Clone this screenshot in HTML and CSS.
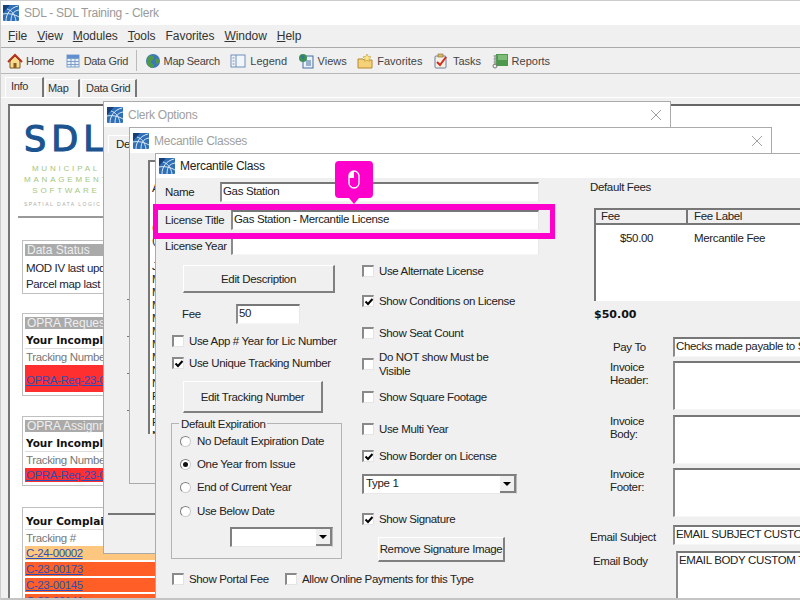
FILE: index.html
```html
<!DOCTYPE html>
<html lang="en">
<head>
  <meta charset="UTF-8">
  <title>SDL - SDL Training - Clerk</title>
  <link rel="stylesheet" href="styles.css">
</head>
<body>
  <svg class="defs" width="0" height="0">
    <symbol id="globe" viewBox="0 0 16 16">
      <rect width="16" height="16" rx="1" fill="#2f6fb5"/>
      <path d="M0 0h7L0 8z" fill="#173f78"/>
      <path d="M3 16C3 9 7 3 15 1M8 16C8 10 10 6 16 5M0 9c5-1 11 0 16 3M4 4c4 1 8 5 9 12" fill="none" stroke="#d8e8f6" stroke-width="1"/>
    </symbol>
    <symbol id="close" viewBox="0 0 12 12">
      <path d="M1 1l10 10M11 1L1 11" stroke="#a0a0a0" stroke-width="1" fill="none"/>
    </symbol>
    <symbol id="tick" viewBox="0 0 12 12">
      <path d="M2.5 5.5l2.5 2.5 4.5-5" stroke="#000" stroke-width="2" fill="none"/>
    </symbol>
  </svg>

  <div class="app">
    <div class="app-title">
      <svg class="icon16"><use href="#globe"/></svg>
      <span>SDL - SDL Training - Clerk</span>
    </div>

    <div class="menubar">
      <span><u>F</u>ile</span>
      <span><u>V</u>iew</span>
      <span><u>M</u>odules</span>
      <span><u>T</u>ools</span>
      <span>Favorites</span>
      <span><u>W</u>indow</span>
      <span><u>H</u>elp</span>
    </div>

    <div class="toolbar">
      <div class="tool">
        <svg class="tool-icon" viewBox="0 0 16 16"><path d="M3 8v7h10V8L8 3z" fill="#f6dc8c" stroke="#7a5a20"/><path d="M1 9l7-7 7 7" fill="none" stroke="#b5301c" stroke-width="2"/><rect x="6.500" y="10" width="3" height="5" fill="#8a5a20"/></svg>
        <span>Home</span>
      </div>
      <div class="tool">
        <svg class="tool-icon" viewBox="0 0 16 16"><rect x="2" y="2" width="12" height="12" fill="#e8f0fa" stroke="#7f9fc8"/><path d="M2 5.500h12M2 8.500h12M2 11.500h12M6 2v12M10 2v12" stroke="#7f9fc8"/><rect x="2" y="2" width="12" height="3" fill="#5f8fd0"/></svg>
        <span>Data Grid</span>
      </div>
      <div class="tool-sep"></div>
      <div class="tool">
        <svg class="tool-icon" viewBox="0 0 16 16"><circle cx="8" cy="8" r="7" fill="#3f78b8"/><path d="M4 3c3-1 5 0 5 2S6 7 6 9s3 2 3 4l-2 2C3 14 1 10 2 7z" fill="#4f9a48"/><path d="M11 6c2-1 3 0 3 2s-1 3-2 3-2-4-1-5z" fill="#4f9a48"/></svg>
        <span>Map Search</span>
      </div>
      <div class="tool tool-wide">
        <svg class="tool-icon" viewBox="0 0 16 16"><rect x="1" y="2" width="14" height="12" fill="#f2f6fb" stroke="#6f8fbc"/><path d="M6 2v12" stroke="#6f8fbc"/><path d="M2.500 5h2M2.500 8h2M2.500 11h2" stroke="#6f8fbc"/></svg>
        <span>Legend</span>
      </div>
      <div class="tool tool-wide">
        <svg class="tool-icon" viewBox="0 0 16 16"><rect x="5" y="3" width="10" height="12" fill="#e9f1fa" stroke="#466f9f"/><path d="M8 8h5M8 10h5M8 12h5" stroke="#466f9f"/><circle cx="5" cy="5" r="4" fill="#3f8f58"/><path d="M3 3c2 0 3 1 2 3" stroke="#2f6fb5" fill="none" stroke-width="1.500"/></svg>
        <span>Views</span>
      </div>
      <div class="tool tool-wide">
        <svg class="tool-icon" viewBox="0 0 16 16"><path d="M1 6h5l1 1h8v8H1z" fill="#f5d27a" stroke="#b58a30"/><path d="M10 1l1.200 2.500 2.800.3-2 2 .5 2.700-2.500-1.300-2.500 1.300.5-2.700-2-2 2.800-.3z" fill="#fbe68a" stroke="#c09a30" stroke-width=".6"/></svg>
        <span>Favorites</span>
      </div>
      <div class="tool tool-wide">
        <svg class="tool-icon" viewBox="0 0 16 16"><rect x="2" y="3" width="11" height="12" rx="1" fill="#f4f0e4" stroke="#6f7f9f"/><rect x="5" y="1" width="5" height="3" fill="#d8b86a" stroke="#8a7030" stroke-width=".6"/><path d="M4 9l3 3 6-8" stroke="#d02a20" stroke-width="2" fill="none"/></svg>
        <span>Tasks</span>
      </div>
      <div class="tool tool-wide">
        <svg class="tool-icon" viewBox="0 0 16 16"><rect x="4" y="1" width="12" height="12" fill="#4d9a4f"/><rect x="6" y="2" width="9" height="5" fill="#7dbb78"/><path d="M3 2v10" stroke="#777"/><path d="M1.500 3h3M1.500 6h3M1.500 9h3" stroke="#999"/><circle cx="3" cy="13" r="2" fill="none" stroke="#777"/></svg>
        <span>Reports</span>
      </div>
    </div>

    <div class="tabs">
      <div class="tab tab-active">Info</div>
      <div class="tab tab-map">Map</div>
      <div class="tab tab-grid">Data Grid</div>
    </div>

    <div class="pane">
      <div class="panel">
        <div class="logo">
          <div class="logo-sdl">SDL</div>
          <div class="logo-sub">MUNICIPAL<br>MANAGEMENT<br>SOFTWARE</div>
          <div class="logo-small">SPATIAL DATA LOGIC</div>
        </div>
        <div class="logo-rule"></div>

        <div class="card card-status">
          <div class="card-head">Data Status</div>
          <div class="card-row">MOD IV last updated</div>
          <div class="card-row">Parcel map last updated</div>
        </div>

        <div class="card card-opra">
          <div class="card-head">OPRA Requests</div>
          <div class="card-bold">Your Incomplete</div>
          <div class="card-row muted">Tracking Number</div>
          <div class="card-link red tall"><a>OPRA-Req-23-00012</a></div>
        </div>

        <div class="card card-assign">
          <div class="card-head">OPRA Assignments</div>
          <div class="card-bold">Your Incomplete</div>
          <div class="card-row muted">Tracking Number</div>
          <div class="card-link red"><a>OPRA-Req-23-00012</a></div>
        </div>

        <div class="card card-complaints">
          <div class="card-bold">Your Complaints</div>
          <div class="card-row muted">Tracking #</div>
          <div class="card-link peach"><a>C-24-00002</a></div>
          <div class="card-link orange"><a>C-23-00173</a></div>
          <div class="card-link orange"><a>C-23-00145</a></div>
          <div class="card-link orange"><a>C-23-00141</a></div>
        </div>
      </div>
    </div>

    <!-- stacked child windows -->
    <div class="window win-options">
      <div class="win-title">
        <svg class="icon16"><use href="#globe"/></svg>
        <span>Clerk Options</span>
        <svg class="win-close"><use href="#close"/></svg>
      </div>
      <div class="win-body">
        <div class="sub-tab">Details</div>
        <div class="sub-panel">
          <i></i><i></i><i></i><i></i>
        </div>
      </div>
    </div>

    <div class="window win-classes">
      <div class="win-title">
        <svg class="icon16"><use href="#globe"/></svg>
        <span>Mecantile Classes</span>
        <svg class="win-close"><use href="#close"/></svg>
      </div>
      <div class="win-body">
        <div class="class-list">
          <div>Auto</div><div>&nbsp;</div><div>&nbsp;</div><div>(Class</div><div>(Other</div><div>&nbsp;</div><div>John</div>
          <div>Market</div><div>Mobile</div><div>Motor</div><div>Movie</div><div>Music</div><div>Meat</div><div>Milk</div>
          <div>Nail</div><div>News</div><div>Peddler</div><div>Pet</div><div>Pool</div><div>Nursery</div>
        </div>
      </div>
    </div>

    <div class="window win-class">
      <div class="win-title win-title-on">
        <svg class="icon16"><use href="#globe"/></svg>
        <span>Mercantile Class</span>
      </div>
      <div class="class-form">
        <div class="form-main">
          <div class="field name-row">
            <label class="label-name">Name</label>
            <div class="input">Gas Station</div>
          </div>
          <div class="field title-row">
            <label class="label-title">License Title</label>
            <div class="input">Gas Station - Mercantile License</div>
          </div>
          <div class="field year-row">
            <label class="label-title">License Year</label>
            <div class="input"></div>
          </div>

          <div class="form-cols">
            <div class="col-left">
              <button class="btn btn-desc">Edit Description</button>
              <div class="fee-row">
                <label>Fee</label>
                <div class="input fee-input">50</div>
              </div>
              <div class="check-row app-year"><span class="check"></span>Use App # Year for Lic Number</div>
              <div class="check-row unique"><span class="check"><svg><use href="#tick"/></svg></span>Use Unique Tracking Number</div>
              <button class="btn btn-track">Edit Tracking Number</button>
              <div class="group">
                <span class="group-legend">Default Expiration</span>
                <div class="radio-row"><span class="radio"></span>No Default Expiration Date</div>
                <div class="radio-row"><span class="radio radio-on"></span>One Year from Issue</div>
                <div class="radio-row"><span class="radio"></span>End of Current Year</div>
                <div class="radio-row"><span class="radio"></span>Use Below Date</div>
                <div class="combo date-combo"><span class="combo-text"></span><span class="combo-arrow"></span></div>
              </div>
            </div>

            <div class="col-mid">
              <div class="check-row m-alt"><span class="check"></span>Use Alternate License</div>
              <div class="check-row m-cond"><span class="check"><svg><use href="#tick"/></svg></span>Show Conditions on License</div>
              <div class="check-row m-seat"><span class="check"></span>Show Seat Count</div>
              <div class="check-row check-wrap m-must"><span class="check"></span><span>Do NOT show Must be<br>Visible</span></div>
              <div class="check-row m-square"><span class="check"></span>Show Square Footage</div>
              <div class="check-row m-multi"><span class="check"></span>Use Multi Year</div>
              <div class="check-row m-border"><span class="check"><svg><use href="#tick"/></svg></span>Show Border on License</div>
              <div class="combo type-combo"><span class="combo-text">Type 1</span><span class="combo-arrow"></span></div>
              <div class="check-row m-sign"><span class="check"><svg><use href="#tick"/></svg></span>Show Signature</div>
              <button class="btn btn-sign">Remove Signature Image</button>
            </div>
          </div>

          <div class="form-bottom">
            <div class="check-row portal"><span class="check"></span>Show Portal Fee</div>
            <div class="check-row"><span class="check"></span>Allow Online Payments for this Type</div>
          </div>
        </div>

        <div class="form-side">
          <div class="side-caption">Default Fees</div>
          <div class="listview">
            <div class="lv-head">
              <div class="lv-col1">Fee</div>
              <div class="lv-col2">Fee Label</div>
            </div>
            <div class="lv-row">
              <div class="lv-col1 lv-amount">$50.00</div>
              <div class="lv-col2">Mercantile Fee</div>
            </div>
          </div>
          <div class="total">$50.00</div>
          <div class="side-row pay-row">
            <label class="side-label">Pay To</label>
            <div class="input side-input">Checks made payable to SDL Training</div>
          </div>
          <div class="side-row tight-row">
            <label class="side-label">Invoice<br>Header:</label>
            <div class="input side-area"></div>
          </div>
          <div class="side-row">
            <label class="side-label">Invoice<br>Body:</label>
            <div class="input side-area"></div>
          </div>
          <div class="side-row tight-row">
            <label class="side-label">Invoice<br>Footer:</label>
            <div class="input side-area"></div>
          </div>
          <div class="side-row subject-row">
            <label class="side-label label-email">Email Subject</label>
            <div class="input side-input">EMAIL SUBJECT CUSTOM TEXT</div>
          </div>
          <div class="side-row body-row">
            <label class="side-label label-body">Email Body</label>
            <div class="input side-body">EMAIL BODY CUSTOM TEXT</div>
          </div>
        </div>
      </div>
    </div>

    <!-- tutorial highlight and click marker -->
    <div class="highlight"></div>
    <div class="callout">
      <svg class="mouse" viewBox="0 0 12 19">
        <rect x="1" y="1" width="10" height="17" rx="5" fill="none" stroke="#fff" stroke-width="1.400"/>
        <path d="M6 1a5 5 0 0 0-5 5v2h5z" fill="#fff"/>
      </svg>
    </div>
  </div>
</body>
</html>
```

FILE: styles.css
```css
* {
  box-sizing: border-box;
}

body {
  margin: 0;
  background: #fff;
  font-family: "Liberation Sans", Arial, sans-serif;
  font-size: 11.5px;
  letter-spacing: -0.35px;
  color: #222;
}

label {
  white-space: nowrap;
}

.defs {
  position: absolute;
}

.app {
  position: relative;
  width: 800px;
  height: 600px;
  overflow: hidden;
  background: #f0f0f0;
  border-top: 1px solid #ccc;
  border-left: 1px solid #ccc;
}

.app::after {
  content: "";
  position: absolute;
  left: 0;
  right: 0;
  bottom: 0;
  height: 2px;
  background: #c4c4c4;
}

.icon16 {
  width: 16px;
  height: 16px;
  flex: none;
}

/* title, menu, toolbar */
.app-title {
  display: flex;
  align-items: center;
  gap: 5px;
  height: 24px;
  padding-left: 2px;
  background: #fff;
  font-size: 12px;
  letter-spacing: -0.25px;
  color: #9a9a9a;
}

.menubar {
  display: flex;
  align-items: center;
  gap: 10px;
  height: 23px;
  padding-left: 7px;
  border-bottom: 1px solid #aaa;
  font-size: 12px;
  letter-spacing: -0.05px;
  color: #333;
}

.toolbar {
  display: flex;
  align-items: center;
  height: 26px;
  padding-left: 6px;
  border-bottom: 1px solid #b8b8b8;
  font-size: 11px;
  letter-spacing: -0.3px;
  color: #444;
}

.tool {
  display: flex;
  align-items: center;
  gap: 3px;
  margin-right: 10.5px;
}

.tool-wide {
  gap: 4px;
  letter-spacing: 0;
}

.tool-icon {
  width: 16px;
  height: 16px;
  flex: none;
}

.tool-sep {
  width: 1px;
  height: 21px;
  margin: 0 8px 0 -3px;
  background: #bbb;
}

/* main tabs */
.tabs {
  display: flex;
  align-items: flex-end;
  height: 24px;
  padding-left: 4px;
  border-bottom: 1px solid #fff;
  font-size: 11px;
  letter-spacing: -0.3px;
}

.tab {
  height: 18px;
  padding: 2px 0 0 2px;
  margin-right: 1px;
  border-top: 1px solid #fff;
  border-left: 1px solid #fff;
  border-right: 2px solid #777;
  color: #333;
}

.tab-active {
  height: 20px;
  width: 39px;
  padding-left: 5px;
  padding-top: 2px;
}

.tab-map {
  width: 35px;
}

.tab-grid {
  width: 56px;
  padding-left: 4px;
}

.pane {
  padding: 6px 0 0 7px;
}

.panel {
  height: 495px;
  padding-left: 11px;
  background: #fff;
  border-top: 2px solid #666;
  border-left: 2px solid #777;
}

/* logo */
.logo {
  width: 200px;
  height: 110px;
  padding: 15px 0 0 3px;
}

.logo-sdl {
  font-family: "DejaVu Sans", sans-serif;
  font-size: 35px;
  line-height: 36px;
  letter-spacing: 5px;
  -webkit-text-stroke: 1.2px #1c5490;
  color: #1c5490;
}

.logo-sub {
  width: 84px;
  margin-top: 6px;
  font-size: 8px;
  line-height: 11px;
  letter-spacing: 2.8px;
  text-align: center;
  white-space: nowrap;
  color: #a6c67c;
}

.logo-small {
  margin-top: 5px;
  font-size: 5px;
  letter-spacing: 1.500px;
  color: #aaa;
  white-space: nowrap;
}

.logo-rule {
  width: 150px;
  height: 2px;
  margin-left: -3px;
  background: #999;
}

/* info cards */
.card {
  width: 290px;
  margin-left: 1px;
  padding: 3px 2px;
  border: 1px solid #c0c0c0;
  color: #223;
}

.card-status {
  height: 54px;
  margin-top: 22px;
}

.card-opra {
  height: 83px;
  margin-top: 19px;
}

.card-assign {
  height: 70px;
  margin-top: 20px;
}

.card-complaints {
  height: 110px;
  margin-top: 21px;
}

.card-head {
  height: 12px;
  padding-left: 2px;
  background: #aaa;
  font-size: 12px;
  line-height: 12px;
  letter-spacing: 0;
  color: #eee;
}

.card-row {
  height: 16px;
  padding-left: 1px;
  line-height: 16px;
  white-space: nowrap;
}

.card-status .card-head {
  margin-bottom: 4px;
}

.muted {
  color: #777;
}

.card-bold {
  height: 20px;
  padding: 4px 0 0 1px;
  border-bottom: 1px solid #ddd;
  font-family: "DejaVu Sans", sans-serif;
  font-size: 10.5px;
  font-weight: bold;
  line-height: 14px;
  letter-spacing: 0;
  color: #111;
  white-space: nowrap;
}

.card-complaints .card-bold {
  height: 19px;
  padding-top: 3px;
}

.card-link {
  display: flex;
  align-items: center;
  height: 14px;
  margin-bottom: 2px;
  padding-left: 1px;
}

.card-link a {
  color: #2b4fb8;
  text-decoration: underline;
  letter-spacing: -0.4px;
}

.tall {
  height: 27px;
  padding-top: 3px;
}

.red {
  background: #ff2f2f;
}

.peach {
  background: #fdc77f;
}

.orange {
  background: #ff5f26;
}

/* windows */
.window {
  position: absolute;
  background: #f0f0f0;
  border: 1px solid #aaa;
}

.win-options {
  left: 102px;
  top: 100px;
  width: 568px;
  height: 453px;
}

.win-classes {
  left: 128px;
  top: 126px;
  width: 643px;
  height: 357px;
}

.win-class {
  left: 154px;
  top: 152px;
  width: 660px;
  height: 460px;
}

.win-title {
  display: flex;
  align-items: center;
  gap: 5px;
  height: 25px;
  padding-left: 3px;
  background: #fff;
  font-size: 12px;
  letter-spacing: -0.25px;
  color: #a0a0a0;
}

.win-title-on {
  color: #222;
  height: 24px;
}

.win-close {
  width: 12px;
  height: 12px;
  margin-left: auto;
  margin-right: 8px;
}

.win-body {
  position: relative;
}

.sub-tab {
  width: 60px;
  height: 18px;
  margin: 8px 0 0 4px;
  padding: 2px 0 0 7px;
  border-top: 1px solid #fff;
  border-left: 1px solid #fff;
}

.sub-panel {
  display: flex;
  flex-direction: column;
  align-items: flex-start;
  gap: 36px;
  width: 60px;
  height: 362px;
  margin-left: 4px;
  padding: 146px 0 0 19px;
  border-bottom: 2px solid #777;
}

.sub-panel i {
  width: 3px;
  height: 1px;
  background: #777;
}

.class-list {
  width: 30px;
  height: 274px;
  margin: 7px 0 0 18px;
  padding: 20px 0 0 2px;
  overflow: hidden;
  background: #fff;
  border-top: 2px solid #777;
  border-left: 2px solid #777;
  line-height: 13px;
  color: #222;
}

/* mercantile class form */
.class-form {
  display: flex;
  height: 436px;
}

.form-main {
  width: 383px;
  padding-top: 4px;
  flex: none;
}

.field {
  display: flex;
  align-items: center;
  padding-left: 9px;
}

.field label {
  flex: none;
}

.label-name {
  width: 55px;
}

.label-title {
  width: 66px;
}

.input {
  flex: 1;
  height: 20px;
  padding-left: 1px;
  background: #fff;
  border-top: 2px solid #777;
  border-left: 2px solid #8a8a8a;
  border-right: 1px solid #e8e8e8;
  border-bottom: 1px solid #f6f6f6;
  line-height: 15px;
  white-space: nowrap;
  overflow: hidden;
}

.title-row {
  margin-top: 8px;
}

.year-row {
  margin-top: 6px;
}

.year-row .input {
  height: 19px;
}

.form-cols {
  display: flex;
}

.col-left {
  width: 206px;
  flex: none;
}

.col-mid {
  flex: 1;
  white-space: nowrap;
}

.btn {
  display: block;
  padding: 0;
  background: #f0f0f0;
  border-top: 1px solid #fff;
  border-left: 1px solid #fff;
  border-right: 2px solid #808080;
  border-bottom: 2px solid #808080;
  font: inherit;
  letter-spacing: inherit;
  color: #222;
}

.btn-desc {
  width: 152px;
  height: 28px;
  margin: 10px 0 0 27px;
}

.fee-row {
  display: flex;
  align-items: center;
  margin: 11px 0 0 26px;
}

.fee-row label {
  width: 54px;
}

.fee-input {
  flex: none;
  width: 64px;
}

.check-row {
  display: flex;
  align-items: center;
  gap: 5px;
  height: 14px;
  white-space: nowrap;
}

.check {
  position: relative;
  width: 12px;
  height: 12px;
  flex: none;
  background: #fff;
  border-top: 2px solid #8a8a8a;
  border-left: 2px solid #8a8a8a;
  border-right: 1px solid #e4e4e4;
  border-bottom: 1px solid #e4e4e4;
}

.check svg {
  position: absolute;
  left: -1px;
  top: -1px;
  width: 12px;
  height: 12px;
}

.app-year {
  margin: 10px 0 0 16px;
}

.unique {
  margin: 8px 0 0 16px;
}

.btn-track {
  width: 140px;
  height: 32px;
  margin: 11px 0 0 27px;
}

.group {
  position: relative;
  width: 171px;
  height: 136px;
  margin: 10px 0 0 15px;
  padding: 10px 0 0 8px;
  border: 1px solid #b4b4b4;
}

.group-legend {
  position: absolute;
  left: 7px;
  top: -7px;
  padding: 0 2px;
  background: #f0f0f0;
  line-height: 14px;
}

.radio-row {
  display: flex;
  align-items: center;
  gap: 6px;
  height: 14px;
  margin-bottom: 9px;
  white-space: nowrap;
}

.radio-row:nth-child(4) {
  margin-bottom: 10px;
}

.radio {
  display: flex;
  align-items: center;
  justify-content: center;
  width: 11px;
  height: 11px;
  flex: none;
  background: #fff;
  border: 1px solid #ccc;
  border-top-color: #808080;
  border-left-color: #808080;
  border-radius: 50%;
}

.radio-on::after {
  content: "";
  width: 5px;
  height: 5px;
  background: #111;
  border-radius: 50%;
}

.combo {
  display: flex;
  height: 20px;
  background: #fff;
  border-top: 2px solid #808080;
  border-left: 2px solid #808080;
  border-right: 1px solid #bbb;
  border-bottom: 1px solid #e8e8e8;
}

.combo-text {
  flex: 1;
  padding-left: 2px;
  line-height: 15px;
}

.combo-arrow {
  display: flex;
  align-items: center;
  justify-content: center;
  width: 16px;
  background: #f0f0f0;
  border-right: 2px solid #808080;
  border-bottom: 2px solid #808080;
}

.combo-arrow::after {
  content: "";
  border-top: 4px solid #000;
  border-left: 4px solid transparent;
  border-right: 4px solid transparent;
}

.date-combo {
  width: 103px;
  margin: 0 0 0 50px;
}

.m-alt {
  margin-top: 9px;
}

.m-cond {
  margin-top: 16px;
}

.m-seat {
  margin-top: 18px;
}

.check-wrap {
  height: 28px;
  line-height: 14px;
  margin-top: 10px;
}

.m-square {
  margin-top: 12px;
}

.m-multi {
  margin-top: 18px;
}

.m-border {
  margin-top: 13px;
}

.type-combo {
  width: 155px;
  margin-top: 11px;
}

.m-sign {
  margin-top: 18px;
}

.btn-sign {
  width: 127px;
  height: 25px;
  margin: 11px 0 0 16px;
}

.form-bottom {
  display: flex;
  margin-top: 10px;
  padding-left: 16px;
}

.portal {
  width: 113px;
}

/* right hand column */
.form-side {
  width: 260px;
  flex: none;
  margin-left: 51px;
  padding-top: 2px;
}

.side-caption {
  line-height: 14px;
}

.listview {
  width: 220px;
  height: 93px;
  margin: 14px 0 0 4px;
  background: #fff;
  border-top: 2px solid #777;
  border-left: 2px solid #777;
}

.lv-head {
  display: flex;
  height: 15px;
  background: #f0f0f0;
  border-bottom: 2px solid #777;
  line-height: 13px;
}

.lv-head .lv-col1 {
  border-right: 2px solid #777;
}

.lv-col1 {
  width: 92px;
  padding-left: 5px;
  flex: none;
}

.lv-col2 {
  padding-left: 6px;
}

.lv-row {
  display: flex;
  margin-top: 6px;
  line-height: 14px;
}

.lv-amount {
  padding-left: 24px;
}

.total {
  margin: 7px 0 0 4px;
  font-family: "DejaVu Sans", sans-serif;
  font-size: 11px;
  font-weight: bold;
  line-height: 14px;
  letter-spacing: 0;
  color: #111;
}

.side-row {
  display: flex;
  margin-top: 5px;
}

.tight-row {
  margin-top: 4px;
}

.side-label {
  width: 83px;
  padding-left: 20px;
  flex: none;
  line-height: 13px;
}

.pay-row {
  margin-top: 15px;
}

.pay-row .side-label {
  padding: 4px 0 0 23px;
}

.side-input {
  flex: none;
  width: 180px;
}

.side-area {
  flex: none;
  width: 180px;
  height: 49px;
}

.subject-row {
  margin-top: 8px;
}

.label-email {
  padding: 6px 0 0 0;
}

.body-row {
  margin-top: 6px;
}

.label-body {
  width: 86px;
  padding: 4px 0 0 3px;
}

.side-body {
  flex: none;
  width: 180px;
  height: 60px;
}

/* tutorial overlay */
.highlight {
  position: absolute;
  left: 152px;
  top: 203px;
  width: 402px;
  height: 35px;
  border: 6px solid #ff00cc;
  border-left-width: 5px;
  border-right-width: 5px;
}

.callout {
  position: absolute;
  left: 334px;
  top: 160px;
  width: 38px;
  height: 37px;
  display: flex;
  align-items: center;
  justify-content: center;
  background: #ff00cc;
  border-radius: 4px;
}

.callout::after {
  content: "";
  position: absolute;
  left: 14px;
  bottom: -6px;
  border-top: 6px solid #ff00cc;
  border-left: 5px solid transparent;
  border-right: 5px solid transparent;
}

.mouse {
  width: 12px;
  height: 19px;
}
```
